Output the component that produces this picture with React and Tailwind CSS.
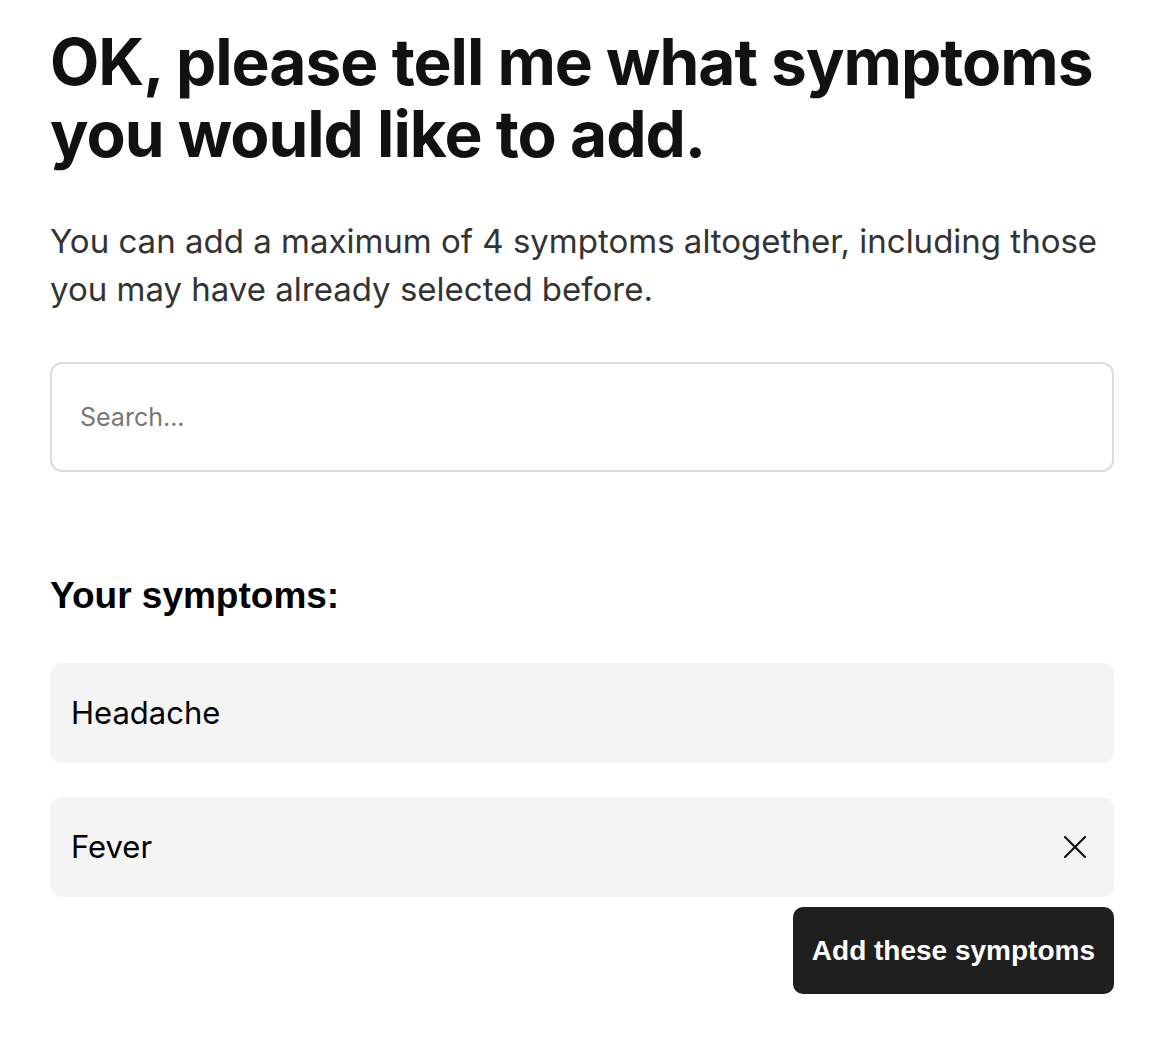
const symptoms = [
  { name: 'Headache', removable: false },
  { name: 'Fever', removable: true },
]

function CloseIcon() {
  return (
    <svg width="24" height="24" viewBox="0 0 24 24" fill="none" stroke="#111" strokeWidth="2.2" strokeLinecap="round">
      <path d="M2 2 L22 22" />
      <path d="M22 2 L2 22" />
    </svg>
  )
}

export default function App() {
  return (
    <div className="min-h-screen bg-white px-[50px] pt-[26px] pb-10 w-[1172px]">
      <h1 className="font-['Inter',sans-serif] font-bold text-[64px] leading-[72px] tracking-[-1px] text-[#111]">
        OK, please tell me what symptoms you would like to add.
      </h1>

      <p className="mt-[47px] font-['Inter',sans-serif] text-[33px] leading-[48px] tracking-[0px] text-[#333]">
        You can add a maximum of 4 symptoms altogether, including those you may have already selected before.
      </p>

      <div className="mt-[49px] w-[1064px]">
        <input
          type="text"
          placeholder="Search..."
          className="w-full h-[110px] rounded-[12px] border-2 border-[#dcdcdc] px-[28px] font-['Inter',sans-serif] text-[25px] text-[#222] placeholder:text-[#777] outline-none"
        />
      </div>

      <h2 className="mt-[102px] font-['Liberation_Sans',sans-serif] font-bold text-[37px] leading-[44px] tracking-[0px] text-black">
        Your symptoms:
      </h2>

      <div className="mt-[45px] flex flex-col gap-[34px] w-[1064px]">
        {symptoms.map((s) => (
          <div key={s.name} className="h-[100px] rounded-[12px] bg-[#f4f4f4] flex items-center justify-between pl-[21px] pr-[27px]">
            <span className="font-['Inter',sans-serif] text-[31px] text-black">{s.name}</span>
            {s.removable && <CloseIcon />}
          </div>
        ))}
      </div>

      <div className="mt-[10px] flex justify-end w-[1064px]">
        <button className="h-[87px] px-[19px] rounded-[10px] bg-[#1f1f1f] text-white font-['Liberation_Sans',sans-serif] font-bold text-[28px] tracking-[0px]">
          Add these symptoms
        </button>
      </div>
    </div>
  )
}
